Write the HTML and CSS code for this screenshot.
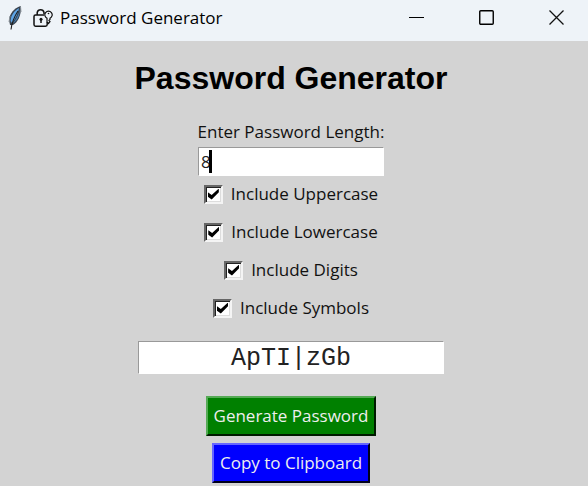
FILE: index.html
```html
<!DOCTYPE html>
<html lang="en">
<head>
    <meta charset="UTF-8">
    <meta name="viewport" content="width=device-width, initial-scale=1.0">
    <title>Password Generator</title>
    <link rel="stylesheet" href="styles.css">
</head>
<body>

<header class="titlebar">
    <svg class="feather" width="16" height="26" viewBox="0 0 16 26">
        <path d="M13.500 1C7 3 2.500 9 2 15L3 20L6 20C11 17 14 11 14 2Z" fill="#39434f"/>
        <path d="M12 3C7 6 4 10 3.500 16L5 18C9 13 11 8 12 3Z" fill="#5da4e6"/>
        <path d="M12.800 4C12 10 9 14 6 18.500C10.500 15 13 11 12.800 4Z" fill="#4580b8"/>
        <path d="M11 6C7 12 5 17 4 24.500" fill="none" stroke="#1c1c1c" stroke-width="1.100"/>
        <path d="M3 11L2 17M13.500 1.500L14 7" stroke="#8d949b" stroke-width="1"/>
    </svg>
    <svg class="lock" width="20" height="20" viewBox="0 0 20 20" fill="none" stroke="#111" stroke-width="1.500">
        <path d="M11 7H2.500Q1 7 1 8.500V16.500Q1 18.200 2.500 18.200H12.500Q14.200 18.200 14.200 16.500V14"/>
        <path d="M4.200 7V4.500A3.500 3.500 0 0 1 11 4.500V6"/>
        <path d="M14 10.200A3.700 3.700 0 1 1 17 10.200V11.500L16 12.500L17 13.500L15.500 15.500L14 14Z" stroke-width="1.200"/>
        <circle cx="15.500" cy="5.500" r="0.800" fill="#111" stroke="none"/>
        <circle cx="8" cy="11.300" r="1.500" fill="#111" stroke="none"/>
        <path d="M8 11V15"/>
    </svg>
    <span class="titlebar-text">Password Generator</span>
    <div class="window-buttons">
        <button type="button" aria-label="Minimize">
            <svg width="17" height="17" viewBox="0 0 17 17"><path d="M1 8.500H16" stroke="#000"/></svg>
        </button>
        <button type="button" aria-label="Maximize">
            <svg width="17" height="17" viewBox="0 0 17 17"><rect x="1.750" y="1.750" width="13.500" height="13.500" rx="1" fill="none" stroke="#000" stroke-width="1.400"/></svg>
        </button>
        <button type="button" aria-label="Close">
            <svg width="17" height="17" viewBox="0 0 17 17"><path d="M1.500 1.500L15.500 15.500M15.500 1.500L1.500 15.500" stroke="#111" stroke-width="1.300"/></svg>
        </button>
    </div>
</header>

<main class="generator">
    <h1>Password Generator</h1>

    <label for="length">Enter Password Length:</label>
    <div class="length-box">
        <input class="field" type="text" id="length" value="8">
        <span class="caret"></span>
    </div>

    <div class="options">
        <label class="option"><input type="checkbox" id="uppercase" checked>Include Uppercase</label>
        <label class="option"><input type="checkbox" id="lowercase" checked>Include Lowercase</label>
        <label class="option"><input type="checkbox" id="digits" checked>Include Digits</label>
        <label class="option"><input type="checkbox" id="symbols" checked>Include Symbols</label>
    </div>

    <input class="field result" type="text" id="password" aria-label="Generated password" value="ApTI|zGb">

    <button type="button" class="action generate">Generate Password</button>
    <button type="button" class="action copy">Copy to Clipboard</button>
</main>

</body>
</html>
```

FILE: styles.css
```css
* {
    box-sizing: border-box;
}

body {
    margin: 0;
    min-height: 100vh;
    background-color: #d3d3d3;
    color: #111111;
    font-family: "Open Sans", "Noto Sans", sans-serif;
    font-size: 17px;
    line-height: 24px;
}

.titlebar {
    display: flex;
    align-items: center;
    height: 41px;
    padding: 0 23px 6px 7px;
    background-color: #eef3f8;
}

.feather {
    margin-right: 10px;
}

.lock {
    margin-right: 7px;
}

.titlebar-text {
    color: #000000;
}

.window-buttons {
    display: flex;
    gap: 53px;
    margin-left: auto;
}

.window-buttons button {
    display: flex;
    padding: 0;
    border: none;
    background: none;
}

.generator {
    display: flex;
    flex-direction: column;
    align-items: center;
    padding: 17px 6px 4px 0;
}

h1 {
    margin: 0 0 22px;
    color: #000000;
    font-family: "Liberation Sans", Arial, sans-serif;
    font-size: 32px;
    line-height: 40px;
}

.length-box {
    position: relative;
    margin-top: 3px;
}

.field {
    display: block;
    padding: 0 2px;
    border: 1px solid;
    border-color: #999999 #ffffff #ffffff #999999;
    border-radius: 0;
    outline: none;
    background-color: #ffffff;
    color: #222222;
    font: inherit;
}

.length-box .field {
    width: 186px;
    height: 29px;
}

.caret {
    position: absolute;
    top: 3px;
    left: 11px;
    width: 3px;
    height: 23px;
    background-color: #000000;
}

.options {
    display: flex;
    flex-direction: column;
    align-items: center;
    gap: 14px;
    margin-top: 6px;
}

.option {
    display: flex;
    align-items: center;
    gap: 8px;
}

.option input {
    appearance: none;
    display: grid;
    place-items: center;
    width: 19px;
    height: 19px;
    margin: 0;
    border: 2px solid;
    border-color: #666666 #f4f4f4 #f4f4f4 #666666;
    background-color: #ffffff;
    box-shadow: inset 1px 1px #222222, inset -1px -1px #dddddd;
}

.option input:checked::before {
    content: "";
    width: 11px;
    height: 11px;
    background-color: #000000;
    clip-path: polygon(0 35%, 35% 60%, 100% 0, 100% 35%, 35% 100%, 0 75%);
}

.result {
    width: 306px;
    height: 33px;
    margin: 21px 0 22px;
    padding-top: 2px;
    font-family: "Liberation Mono", "Courier New", monospace;
    font-size: 25px;
    text-align: center;
}

.action {
    height: 40px;
    padding: 0 6px;
    border: 2px solid;
    border-radius: 0;
    color: #eeeeee;
    font: inherit;
}

.generate {
    margin-bottom: 7px;
    border-color: #55aa55 #001a00 #001a00 #55aa55;
    background-color: #008000;
}

.copy {
    border-color: #6666ff #00001a #00001a #6666ff;
    background-color: #0000ff;
}
```
